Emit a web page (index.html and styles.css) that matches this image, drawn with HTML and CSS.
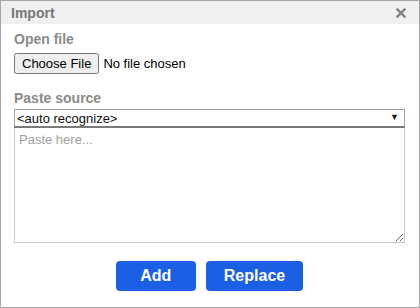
FILE: index.html
```html
<!doctype html>
<html lang="en">
  <head>
    <meta charset="UTF-8" />
    <title>Import</title>
    <link rel="stylesheet" href="styles.css">
  </head>
  <body>
    <div class="dialog">
      <div class="dialog-header">
        <span class="dialog-title">Import</span>
        <span class="close-btn">
          <svg xmlns="http://www.w3.org/2000/svg" viewBox="0 0 10 10" width="10" height="10">
            <path d="M1.5 1.5l7 7M8.5 1.5l-7 7" stroke="#808080" stroke-width="2.4" stroke-linecap="square" />
          </svg>
        </span>
      </div>
      <div class="dialog-body">
        <div class="section-title">Open file</div>
        <input type="file" class="file-input" />
        <div class="section-title paste-title">Paste source</div>
        <div class="select-wrap">
          <select class="source-select">
            <option>&lt;auto recognize&gt;</option>
          </select>
          <span class="select-arrow">&#9660;</span>
        </div>
        <textarea class="paste-area" placeholder="Paste here..."></textarea>
        <div class="actions">
          <button class="action-btn add-btn">Add</button>
          <button class="action-btn">Replace</button>
        </div>
      </div>
    </div>
  </body>
</html>
```

FILE: styles.css
```css
* {
  margin: 0;
  padding: 0;
  box-sizing: border-box;
}

body {
  font-family: 'Liberation Sans', Arial, sans-serif;
  background: #ffffff;
  width: 420px;
  height: 308px;
  overflow: hidden;
}

.dialog {
  width: 420px;
  height: 308px;
  border: 1px solid #a6a6a6;
  background: #ffffff;
}

.dialog-header {
  display: flex;
  align-items: center;
  justify-content: space-between;
  height: 23px;
  padding: 0 13px 0 10px;
  background: #f0f0f0;
}

.dialog-title {
  font-size: 14px;
  font-weight: bold;
  color: #777777;
}

.close-btn {
  display: flex;
}

.dialog-body {
  padding: 6px 14px 0 13px;
}

.section-title {
  font-size: 14px;
  font-weight: bold;
  color: #8a8a8a;
  line-height: 18px;
}

.file-input {
  display: block;
  margin-top: 5px;
  font-family: 'Liberation Sans', Arial, sans-serif;
  font-size: 13px;
  color: #000000;
}

.paste-title {
  margin-top: 15px;
}

.select-wrap {
  position: relative;
  margin-top: 2px;
}

.source-select {
  display: block;
  width: 100%;
  height: 19px;
  appearance: none;
  -webkit-appearance: none;
  border: 1px solid #a0a0a0;
  border-bottom: 2px solid #7a7a7a;
  border-radius: 0;
  background: #ffffff;
  padding: 0 2px;
  font-family: 'Liberation Sans', Arial, sans-serif;
  font-size: 13px;
  color: #111111;
  outline: none;
}

.select-arrow {
  position: absolute;
  right: 6px;
  top: 3px;
  font-size: 9px;
  color: #222222;
  pointer-events: none;
}

.paste-area {
  display: block;
  width: 100%;
  height: 115px;
  border: 1px solid #c8c8c8;
  border-top: none;
  padding: 4px 4px;
  font-family: 'Liberation Sans', Arial, sans-serif;
  font-size: 13px;
  color: #222222;
  resize: vertical;
  outline: none;
}

.paste-area::placeholder {
  color: #a0a0a0;
}

.actions {
  display: flex;
  justify-content: center;
  gap: 10px;
  margin-top: 18px;
}

.action-btn {
  height: 30px;
  padding: 0 18px;
  min-width: 80px;
  background: #1a5fe4;
  color: #ffffff;
  border: none;
  border-radius: 4px;
  font-family: 'Liberation Sans', Arial, sans-serif;
  font-size: 16px;
  font-weight: bold;
  cursor: pointer;
}
```
